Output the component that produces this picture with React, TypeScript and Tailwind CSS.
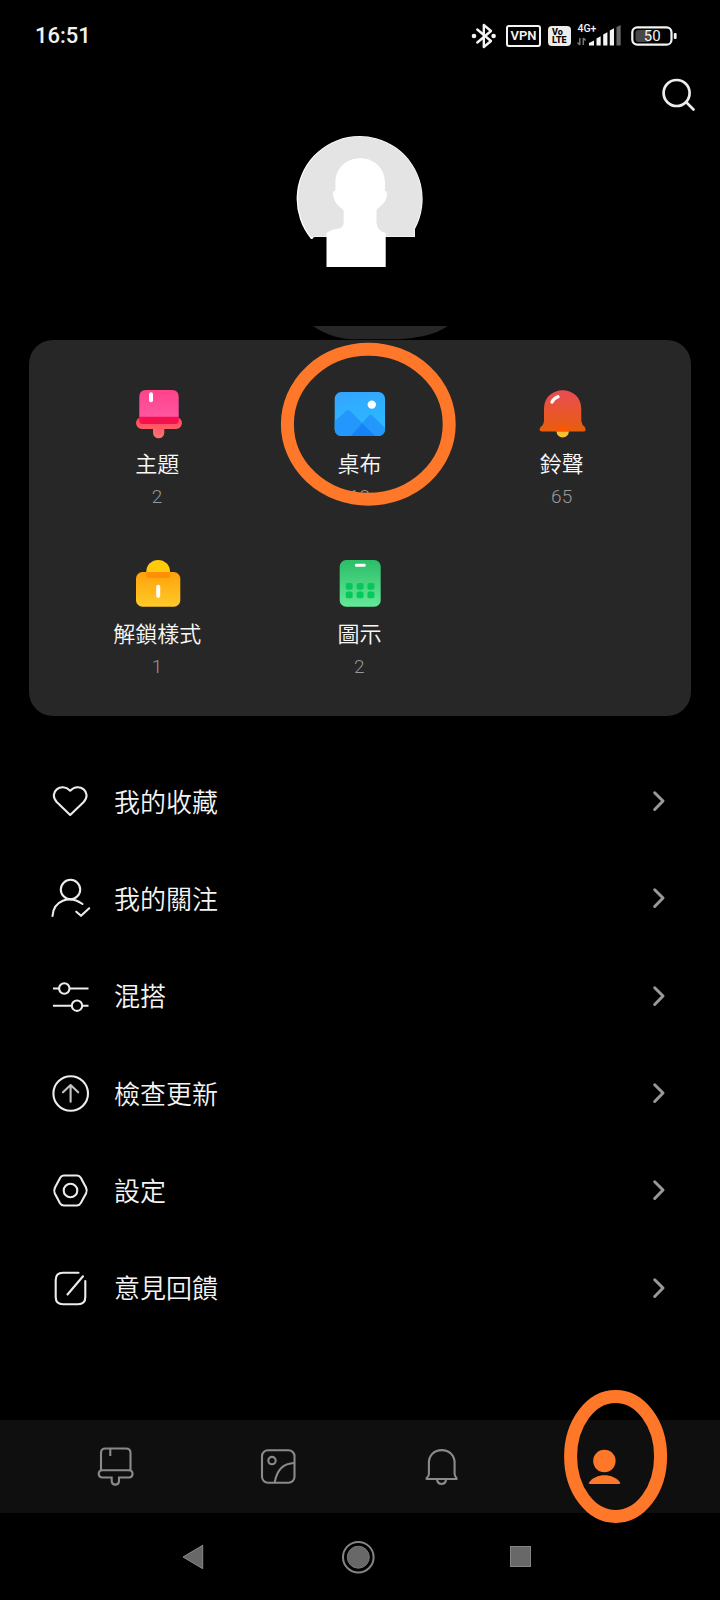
import type { ReactNode } from "react";

const cjk = "font-['Roboto','Noto_Sans_CJK_TC',sans-serif]";

function StatusBar() {
  return (
    <header className="flex h-[70px] items-center justify-between pl-[35px] pr-[42px] pt-px">
      <time className="font-['Roboto',sans-serif] text-[22px] font-medium leading-none text-[#f2f2f2]">16:51</time>
      <div className="flex items-center text-[#f4f4f4]">
        <svg className="mr-[9px]" width="26" height="26" viewBox="0 0 26 26" fill="none" stroke="currentColor" strokeWidth="2.4" strokeLinejoin="round" strokeLinecap="round">
          <path d="M6.3 6.5 L20 18 L12.8 24 V2 L20 8 L6.3 19.5" />
          <circle cx="3" cy="13" r="2.3" fill="currentColor" stroke="none" />
          <circle cx="22.6" cy="13" r="2.3" fill="currentColor" stroke="none" />
        </svg>
        <span className="mr-[7px] flex h-[22px] w-[35px] items-center justify-center rounded-[3px] border-2 border-current font-['Roboto',sans-serif] text-[13px] font-semibold leading-none">VPN</span>
        <span className="mr-[6px] flex h-[20px] w-[23px] flex-col justify-center rounded-[4px] bg-[#ececec] pl-[4px] font-['Roboto',sans-serif] text-[9px] font-extrabold leading-[8px] text-black">
          <span>Vo</span>
          <span>LTE</span>
        </span>
        <svg className="mr-[9px]" width="45" height="26" viewBox="0 0 45 26" fill="currentColor">
          <text x="0.5" y="9" className="font-['Roboto',sans-serif] text-[10.5px] font-medium">4G+</text>
          <path d="M2.8 15 V22 M0.5 19.5 L2.8 22 M6.3 22 V15 M6.3 15 L8.6 17.5" stroke="#777" strokeWidth="1.5" fill="none" />
          <path d="M12 22.5 V20 L17 17.5 V22.5Z M19.5 22.5 V15.5 L23.7 13.3 V22.5Z M26.2 22.5 V11.5 L30.4 9.3 V22.5Z M32.8 22.5 V7.5 L37 5.3 V22.5Z" />
          <path d="M39.5 22.5 V4 L43.7 2 V22.5Z" fill="#666" />
        </svg>
        <svg width="47" height="22" viewBox="0 0 47 22">
          <rect x="1.3" y="2.3" width="39.2" height="17.4" rx="5" fill="none" stroke="currentColor" strokeWidth="2.2" />
          <rect x="4.5" y="5" width="15" height="12" rx="3" fill="#484848" />
          <rect x="42.8" y="8" width="2.8" height="6" rx="1" fill="currentColor" />
          <text x="21.2" y="16.4" textAnchor="middle" fill="currentColor" className="font-['Roboto',sans-serif] text-[15px]">50</text>
        </svg>
      </div>
    </header>
  );
}

function Avatar() {
  return (
    <svg width="180" height="215" viewBox="270 125 180 215">
      <path d="M311 239 A63 63 0 1 1 415 229 V237 H315 Q313 237 312.5 239Z" fill="#fff" />
      <path d="M311.5 237.5 A62 62 0 1 1 414.5 228 V236.5 H315Z" fill="#e4e4e4" />
      <path d="M326.5 267 V233 Q331 229.5 338 228.8 Q343.5 228 343.7 222 V211 C343.5 208 335 207 333 194.5 C332.8 191 334.5 191 335.4 190.5 V183 C335.5 150 385 150 385 183 L384.8 190.5 Q387.5 191 387 195 C385.5 206 377 206.5 376.5 211 V223 Q377.5 231 385.7 233 V267Z" fill="#fff" />
      <path d="M313 326 H447.5 C436 334 424 337 400 339.3 H350 C334 337.5 323 333 313 326Z" fill="#272727" />
    </svg>
  );
}

function ThemeIcon() {
  return (
    <svg width="60" height="56" viewBox="127 386 60 56">
      <defs>
        <linearGradient id="theme-base" x1="0" x2="0" y1="0" y2="1"><stop stopColor="#ff455b" /><stop offset="1" stopColor="#ff7373" /></linearGradient>
        <linearGradient id="theme-top" x1="0" x2="0" y1="0" y2="1"><stop stopColor="#ff4389" /><stop offset="1" stopColor="#ff56a2" /></linearGradient>
      </defs>
      <path d="M142 417 H176 A6 6 0 0 1 176 429 H164.3 V432.7 A5.6 5.6 0 0 1 153 432.7 V429 H142 A6 6 0 0 1 142 417Z" fill="url(#theme-base)" />
      <path d="M146 390 H172 Q178.7 390 178.7 397 V417 H139.3 V397 Q139.3 390 146 390Z" fill="url(#theme-top)" />
      <path d="M139.3 416.7 H178.7 V421 Q178.7 424 175.5 424 H142.5 Q139.3 424 139.3 421Z" fill="#f4124e" />
      <rect x="149" y="392.3" width="4" height="10" rx="2" fill="#fff" />
    </svg>
  );
}

function WallpaperIcon() {
  return (
    <svg width="60" height="56" viewBox="329 386 60 56">
      <defs>
        <linearGradient id="sky" x1="0" x2="0.2" y1="0" y2="1"><stop stopColor="#35a3ff" /><stop offset="1" stopColor="#28bdff" /></linearGradient>
        <clipPath id="frame"><rect x="334.7" y="392" width="50.3" height="44" rx="6.5" /></clipPath>
      </defs>
      <g clipPath="url(#frame)">
        <rect x="334" y="391" width="52" height="46" fill="url(#sky)" />
        <path d="M333 422.5 L346.5 410.7 Q348.3 409.3 350 410.7 L376 437 H333Z" fill="#2397fb" />
        <path d="M350 437 L368.5 415.8 Q370.4 414 372.3 415.6 L387 430 V437Z" fill="#2397fb" />
        <path d="M350 437 L362.3 423.3 L376 437Z" fill="#1583f5" />
      </g>
      <circle cx="371.8" cy="404.6" r="4.2" fill="#fff" />
    </svg>
  );
}

function RingtoneIcon() {
  return (
    <svg width="60" height="56" viewBox="531 386 60 56">
      <defs>
        <linearGradient id="bell" x1="0" x2="0" y1="0" y2="1"><stop stopColor="#e94b56" /><stop offset="1" stopColor="#e85e0b" /></linearGradient>
        <clipPath id="bell-shape"><path d="M543 409 C543 384 580.3 384 580.3 409 V421 Q581 425 583.8 427 Q586 431.5 582 431.5 H541 Q537 431.5 539.5 427 Q543 425 543 420Z" /></clipPath>
      </defs>
      <circle cx="561.7" cy="431.3" r="6.2" fill="#ffbd32" />
      <g clipPath="url(#bell-shape)">
        <rect x="536" y="389" width="52" height="43" fill="url(#bell)" />
        <circle cx="561.7" cy="431.3" r="6.2" fill="#fb5600" />
      </g>
      <path d="M551 402 Q552.8 398.5 557 396.8" stroke="#fff" strokeWidth="3.3" strokeLinecap="round" fill="none" />
    </svg>
  );
}

function LockIcon() {
  return (
    <svg width="60" height="56" viewBox="127 556 60 56">
      <defs>
        <linearGradient id="lock" x1="0" x2="0" y1="0" y2="1"><stop stopColor="#ffa10a" /><stop offset="1" stopColor="#ffca29" /></linearGradient>
      </defs>
      <path d="M146.3 578 V571.5 A11.8 11.5 0 0 1 170 571.5 V578Z" fill="#ffc90c" />
      <rect x="136" y="572" width="44.3" height="34.7" rx="6.5" fill="url(#lock)" />
      <path d="M146.3 572 H170 V576 Q170 578 168 578 H148.3 Q146.3 578 146.3 576Z" fill="#ff8f06" />
      <rect x="156.2" y="584.7" width="4" height="13.2" rx="1.8" fill="#fff" />
    </svg>
  );
}

function GridIcon() {
  return (
    <svg width="60" height="56" viewBox="329 556 60 56">
      <defs>
        <linearGradient id="tile" x1="0" x2="0" y1="0" y2="1"><stop stopColor="#2bbd67" /><stop offset="1" stopColor="#65e899" /></linearGradient>
      </defs>
      <rect x="339.7" y="560" width="41" height="46.7" rx="6.5" fill="url(#tile)" />
      <rect x="355" y="563.8" width="10.7" height="3" rx="1.3" fill="#fff" />
      <g fill="#05c85b">
        {[345.7, 356.6, 367.4].map((x) => [583, 591.5].map((y) => <rect key={`${x}-${y}`} x={x} y={y} width="7" height="6.8" rx="2" />))}
      </g>
    </svg>
  );
}

const categories: { label: string; count: string; icon: ReactNode }[] = [
  { label: "主題", count: "2", icon: <ThemeIcon /> },
  { label: "桌布", count: "12", icon: <WallpaperIcon /> },
  { label: "鈴聲", count: "65", icon: <RingtoneIcon /> },
  { label: "解鎖樣式", count: "1", icon: <LockIcon /> },
  { label: "圖示", count: "2", icon: <GridIcon /> },
];

const menu: { label: string; drawing: ReactNode }[] = [
  { label: "我的收藏", drawing: <path d="M20.2 34 L6.7 21 C-2 11.5 11 0.5 20.2 9.7 C29.4 0.5 42.4 11.5 33.7 21Z" /> },
  {
    label: "我的關注",
    drawing: (
      <>
        <circle cx="20.5" cy="11.5" r="9.7" />
        <path d="M2.5 38 C3.5 23 19 16.5 32.5 26 M26.3 33.7 L31 37.8 L39.2 30.3" />
      </>
    ),
  },
  {
    label: "混搭",
    drawing: (
      <>
        <circle cx="14.3" cy="12.5" r="5.2" />
        <circle cx="27" cy="29.7" r="5.2" />
        <path d="M3 12.5 H9 M19.5 12.5 H38.5 M3 29.7 H21.8 M32.2 29.7 H38.5" strokeLinecap="butt" />
      </>
    ),
  },
  {
    label: "檢查更新",
    drawing: (
      <>
        <circle cx="20.7" cy="20.5" r="17.3" />
        <path d="M20.6 28.7 V12.5 M13 19.3 L20.6 12 L28.2 19.3" stroke="#c4c4c4" />
      </>
    ),
  },
  {
    label: "設定",
    drawing: (
      <>
        <path d="M13.5 5.5 H27.3 Q29.5 5.5 30.8 7.7 L36 17.5 Q37.5 20.5 36 23.5 L30.8 33 Q29.3 35.5 27 35.5 H13.8 Q11.3 35.5 10 33.3 L4.8 23.5 Q3.5 20.5 5 17.5 L10.2 7.7 Q11.5 5.5 13.5 5.5Z" />
        <circle cx="20.5" cy="20.5" r="6.8" />
      </>
    ),
  },
  {
    label: "意見回饋",
    drawing: <path d="M28.5 4.8 H13 Q5.7 4.8 5.7 12 V29 Q5.7 36.3 13 36.3 H28 Q35.3 36.3 35.3 29 V13 M33 8.3 L17.5 26.5" />,
  },
];

function LibraryCard() {
  return (
    <section className="relative mx-[29px] grid h-[376px] grid-cols-3 content-start rounded-[24px] bg-[#272727] pl-[27px] pr-[28px] pt-[46px]">
      {categories.map((c) => (
        <div key={c.label} className="flex h-[170px] flex-col items-center">
          {c.icon}
          <span className="mt-[6px] text-[22px] font-[350] leading-[34px] text-[#f8f8f8]">{c.label}</span>
          <span className="mt-[2px] text-[19px] font-[350] leading-[26px] tracking-[0.3px] text-[#989898]">{c.count}</span>
        </div>
      ))}
      <svg className="absolute left-[251px] top-[1px]" width="178" height="168" viewBox="280 341 178 168">
        <ellipse cx="368.3" cy="424.2" rx="80.9" ry="75" fill="none" stroke="#ff7729" strokeWidth="13" />
      </svg>
    </section>
  );
}

function TabBar() {
  return (
    <nav className="relative flex h-[93px] items-center bg-[#0f0f0f] pb-px pl-[33px] pr-[34px]">
      <div className="flex flex-1 justify-center">
        <svg width="44" height="44" viewBox="93 1444 44 44" fill="none" stroke="#8a8a8a" strokeWidth="2.1">
          <path d="M101 1470 V1453 Q101 1448.5 105.5 1448.5 H126 Q130.5 1448.5 130.5 1453 V1470 M110.3 1449 V1456 M101.8 1470.2 H129.5 A3.7 3.7 0 0 1 129.5 1477.5 H119 V1481.5 A3.7 3.7 0 0 1 111.7 1481.5 V1477.5 H101.8 A3.7 3.7 0 0 1 101.8 1470.2Z" />
        </svg>
      </div>
      <div className="flex flex-1 justify-center">
        <svg width="44" height="44" viewBox="256.5 1444 44 44" fill="none" stroke="#8a8a8a" strokeWidth="2.1">
          <rect x="262.5" y="1450.3" width="32.5" height="32.5" rx="6" />
          <circle cx="272.5" cy="1460.6" r="3.7" />
          <path d="M275.3 1482 Q278.5 1463.5 294.8 1463" />
        </svg>
      </div>
      <div className="flex flex-1 justify-center">
        <svg width="44" height="44" viewBox="419.4 1444 44 44" fill="none" stroke="#8a8a8a" strokeWidth="2.1" strokeLinejoin="round">
          <path d="M429.3 1464 C428.3 1445.5 456 1445.5 455 1464 V1474 Q455.2 1476 457 1478.3 V1479 H427 V1478.3 Q429.3 1476 429.3 1474Z M437.3 1479 Q438 1484 442 1484 Q446 1484 446.6 1479" />
        </svg>
      </div>
      <div className="flex flex-1 justify-center">
        <svg width="44" height="44" viewBox="582.4 1444 44 44" fill="#ff7729">
          <circle cx="604.8" cy="1461" r="11.2" />
          <path d="M589 1483 C596 1473 613.5 1472.5 620.8 1483 Q620.5 1484 619.5 1484 H590.5 Q589.3 1484 589 1483Z" />
        </svg>
      </div>
      <svg className="absolute left-[562px] top-[-32px]" width="108" height="137" viewBox="562 1388 108 137">
        <ellipse cx="615.6" cy="1456.5" rx="45" ry="60" fill="none" stroke="#ff7729" strokeWidth="13" />
      </svg>
    </nav>
  );
}

export default function App() {
  return (
    <main lang="zh-Hant" className={`flex h-[1600px] w-[720px] flex-col overflow-hidden bg-black ${cjk}`}>
      <StatusBar />
      <div className="flex h-[55px] justify-end pr-[22px] pt-[6px]">
        <svg width="40" height="40" viewBox="658 76 40 40" fill="none" stroke="#ededed" strokeWidth="2.7" strokeLinecap="round">
          <circle cx="676.6" cy="93" r="13" />
          <path d="M686.5 102.5 L693.5 109.5" />
        </svg>
      </div>
      <div className="flex h-[215px] justify-center">
        <Avatar />
      </div>
      <LibraryCard />
      <ul className="mt-[36.5px] flex h-[584px] flex-col">
        {menu.map((m) => (
          <li key={m.label} className="flex flex-1 items-center pl-[50px] pr-[52px]">
            <svg className="mt-[2px]" width="42" height="42" viewBox="0 0 42 42" fill="none" stroke="#ececec" strokeWidth="2.1" strokeLinecap="round" strokeLinejoin="round">
              {m.drawing}
            </svg>
            <span className="ml-[22px] flex-1 pt-[3px] text-[26px] font-[350] leading-[38px] text-[#f4f4f4]">{m.label}</span>
            <svg width="18" height="24" viewBox="0 0 18 24" fill="none" stroke="#999" strokeWidth="3" strokeLinecap="round" strokeLinejoin="round">
              <path d="M4.7 3.8 L13 12 L4.7 20.5" />
            </svg>
          </li>
        ))}
      </ul>
      <div className="flex-1" />
      <TabBar />
      <footer className="flex h-[87px] items-center pl-[181px]">
        <svg width="24" height="28" viewBox="0 0 24 28" fill="#686868" stroke="#8a8a8a" strokeLinejoin="round">
          <path d="M2 14 L21.7 2.3 V25.7Z" />
        </svg>
        <svg className="ml-[136px]" width="34" height="34" viewBox="0 0 34 34">
          <circle cx="17.3" cy="17.2" r="15.3" fill="none" stroke="#858585" strokeWidth="2" />
          <circle cx="17.3" cy="17.2" r="11" fill="#686868" stroke="#777" />
        </svg>
        <span className="ml-[135px] size-[21px] border border-[#858585] bg-[#686868]" />
      </footer>
    </main>
  );
}
